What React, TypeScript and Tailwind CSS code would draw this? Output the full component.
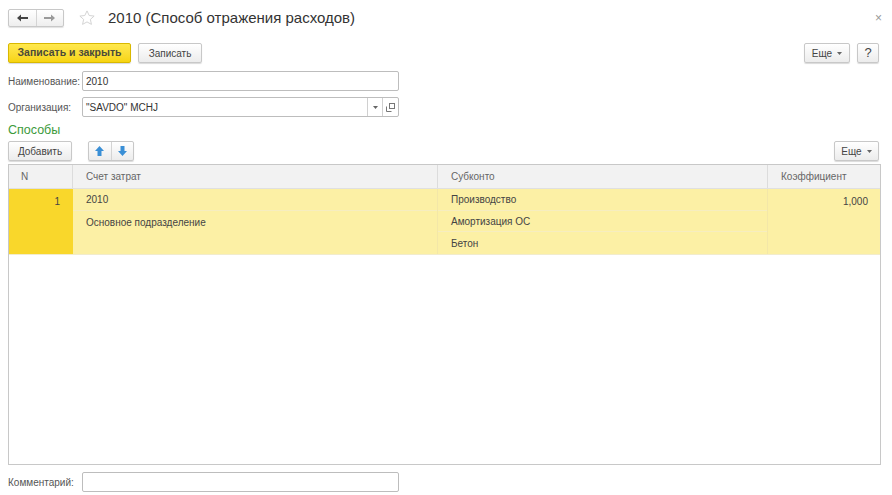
import React from "react";

const font = { fontFamily: '"Liberation Sans", Arial, sans-serif' };

function Btn({ children, className = "" }: { children: React.ReactNode; className?: string }) {
  return (
    <div
      className={`flex items-center justify-center rounded-[2px] border border-[#c8c8c8] bg-gradient-to-b from-white to-[#ececec] text-[10px] text-[#444] shadow-[0_1px_1px_rgba(0,0,0,0.15)] ${className}`}
    >
      {children}
    </div>
  );
}

function Caret() {
  return (
    <svg width="5" height="3" viewBox="0 0 5 3" className="ml-[5px]">
      <path d="M0 0h5L2.5 3z" fill="#666" />
    </svg>
  );
}

export default function App() {
  return (
    <div className="relative h-[495px] w-[892px] bg-white text-[#444]" style={font}>
      {/* Title bar */}
      <div className="flex h-[36px] items-center pl-[8px] pr-[10px]">
        <div className="flex h-[18px] w-[56px] rounded-[2px] border border-[#c8c8c8] bg-gradient-to-b from-white to-[#eeeeee] shadow-[0_1px_1px_rgba(0,0,0,0.12)]">
          <div className="flex flex-1 items-center justify-center border-r border-[#d4d4d4]">
            <svg width="11" height="8" viewBox="0 0 11 8">
              <path d="M0 4L4 0.5V3H11V5H4V7.5Z" fill="#444" />
            </svg>
          </div>
          <div className="flex flex-1 items-center justify-center">
            <svg width="11" height="8" viewBox="0 0 11 8">
              <path d="M11 4L7 0.5V3H0V5H7V7.5Z" fill="#9a9a9a" />
            </svg>
          </div>
        </div>
        <svg width="18" height="18" viewBox="0 0 24 24" className="ml-[14px]">
          <path
            d="M12 2.5l2.9 6.2 6.6.7-5 4.5 1.4 6.6L12 17.2l-5.9 3.3 1.4-6.6-5-4.5 6.6-.7z"
            fill="none"
            stroke="#cfcfcf"
            strokeWidth="1.2"
            strokeLinejoin="round"
          />
        </svg>
        <div className="ml-[12px] text-[15px] text-[#333]">2010 (Способ отражения расходов)</div>
        <div className="ml-auto text-[12px] text-[#999]">×</div>
      </div>

      {/* Command bar */}
      <div className="mt-[7px] flex h-[20px] items-center pl-[8px] pr-[13px]">
        <div className="flex h-[20px] w-[123px] items-center justify-center rounded-[2px] border border-[#d9b800] bg-gradient-to-b from-[#ffe84c] to-[#f7d40e] text-[10.5px] font-bold text-[#4a4a3a] shadow-[0_1px_1px_rgba(0,0,0,0.15)]">
          Записать и закрыть
        </div>
        <Btn className="ml-[7px] h-[20px] w-[64px]">Записать</Btn>
        <Btn className="ml-auto h-[20px] w-[46px]">
          Еще
          <Caret />
        </Btn>
        <Btn className="ml-[7px] h-[20px] w-[22px] text-[13px] text-[#333]">?</Btn>
      </div>

      {/* Fields */}
      <div className="mt-[8px] flex h-[20px] items-center px-[8px]">
        <div className="w-[74px] text-[10px] text-[#555]">Наименование:</div>
        <div className="flex h-[20px] w-[317px] items-center rounded-[2px] border border-[#bdbdbd] pl-[3px] text-[10px] text-[#333]">
          2010
        </div>
      </div>
      <div className="mt-[6px] flex h-[20px] items-center px-[8px]">
        <div className="w-[74px] text-[10px] text-[#555]">Организация:</div>
        <div className="flex h-[20px] w-[317px] items-stretch rounded-[2px] border border-[#bdbdbd] text-[10px] text-[#333]">
          <div className="flex flex-1 items-center pl-[3px]">"SAVDO" MCHJ</div>
          <div className="flex w-[15px] items-center justify-center border-l border-[#d0d0d0]">
            <svg width="5" height="3" viewBox="0 0 5 3">
              <path d="M0 0h5L2.5 3z" fill="#666" />
            </svg>
          </div>
          <div className="flex w-[16px] items-center justify-center border-l border-[#d0d0d0]">
            <svg width="9" height="9" viewBox="0 0 9 9">
              <rect x="3.5" y="0.5" width="5" height="5" fill="none" stroke="#777" />
              <path d="M0.5 3.5V8.5H5.5" fill="none" stroke="#777" />
            </svg>
          </div>
        </div>
      </div>

      <div className="mt-[5px] px-[8px] text-[12.5px] leading-[16px] text-[#3c9a3c]">Способы</div>

      {/* Table command bar */}
      <div className="mt-[3px] flex h-[20px] items-center px-[8px]">
        <Btn className="h-[20px] w-[64px]">Добавить</Btn>
        <div className="ml-[16px] flex h-[20px] w-[46px] rounded-[2px] border border-[#c8c8c8] bg-gradient-to-b from-white to-[#ececec] shadow-[0_1px_1px_rgba(0,0,0,0.15)]">
          <div className="flex flex-1 items-center justify-center border-r border-[#d4d4d4]">
            <svg width="9" height="10" viewBox="0 0 9 10">
              <path d="M4.5 0L9 5H6.5V10H2.5V5H0Z" fill="#3a8fd6" />
            </svg>
          </div>
          <div className="flex flex-1 items-center justify-center">
            <svg width="9" height="10" viewBox="0 0 9 10">
              <path d="M4.5 10L9 5H6.5V0H2.5V5H0Z" fill="#3a8fd6" />
            </svg>
          </div>
        </div>
        <Btn className="ml-auto mr-[5px] h-[20px] w-[45px]">
          Еще
          <Caret />
        </Btn>
      </div>

      {/* Table */}
      <div className="mx-[8px] mt-[3px] flex h-[301px] w-[873px] flex-col border border-[#c8c8c8] text-[10px]">
        <div className="flex h-[24px] border-b border-[#e0e0e0] bg-[#f2f2f2] text-[#666]">
          <div className="flex w-[64px] items-center border-r border-[#dcdcdc] pl-[12px]">N</div>
          <div className="flex w-[365px] items-center border-r border-[#dcdcdc] pl-[13px]">Счет затрат</div>
          <div className="flex w-[330px] items-center border-r border-[#dcdcdc] pl-[13px]">Субконто</div>
          <div className="flex flex-1 items-center pl-[13px]">Коэффициент</div>
        </div>
        <div className="flex h-[66px] border-b border-[#f2eccc] bg-[#fcf0a5] text-[#444]">
          <div className="flex w-[64px] justify-end bg-[#f9d72b] pr-[13px] pt-[5px]">1</div>
          <div className="flex w-[365px] flex-col border-r border-[#f3e7a8]">
            <div className="flex h-[22px] items-center border-b border-[#f6edc0] pl-[13px]">2010</div>
            <div className="flex h-[22px] items-center pl-[13px]">Основное подразделение</div>
          </div>
          <div className="flex w-[330px] flex-col border-r border-[#f3e7a8]">
            <div className="flex h-[22px] items-center border-b border-[#f6edc0] pl-[13px]">Производство</div>
            <div className="flex h-[22px] items-center border-b border-[#f6edc0] pl-[13px]">Амортизация ОС</div>
            <div className="flex h-[22px] items-center pl-[13px]">Бетон</div>
          </div>
          <div className="flex flex-1 justify-end pr-[12px] pt-[5px]">1,000</div>
        </div>
      </div>

      {/* Comment */}
      <div className="mt-[7px] flex h-[20px] items-center px-[8px]">
        <div className="w-[74px] text-[10px] text-[#555]">Комментарий:</div>
        <div className="h-[20px] w-[317px] rounded-[2px] border border-[#bdbdbd]" />
      </div>
    </div>
  );
}
